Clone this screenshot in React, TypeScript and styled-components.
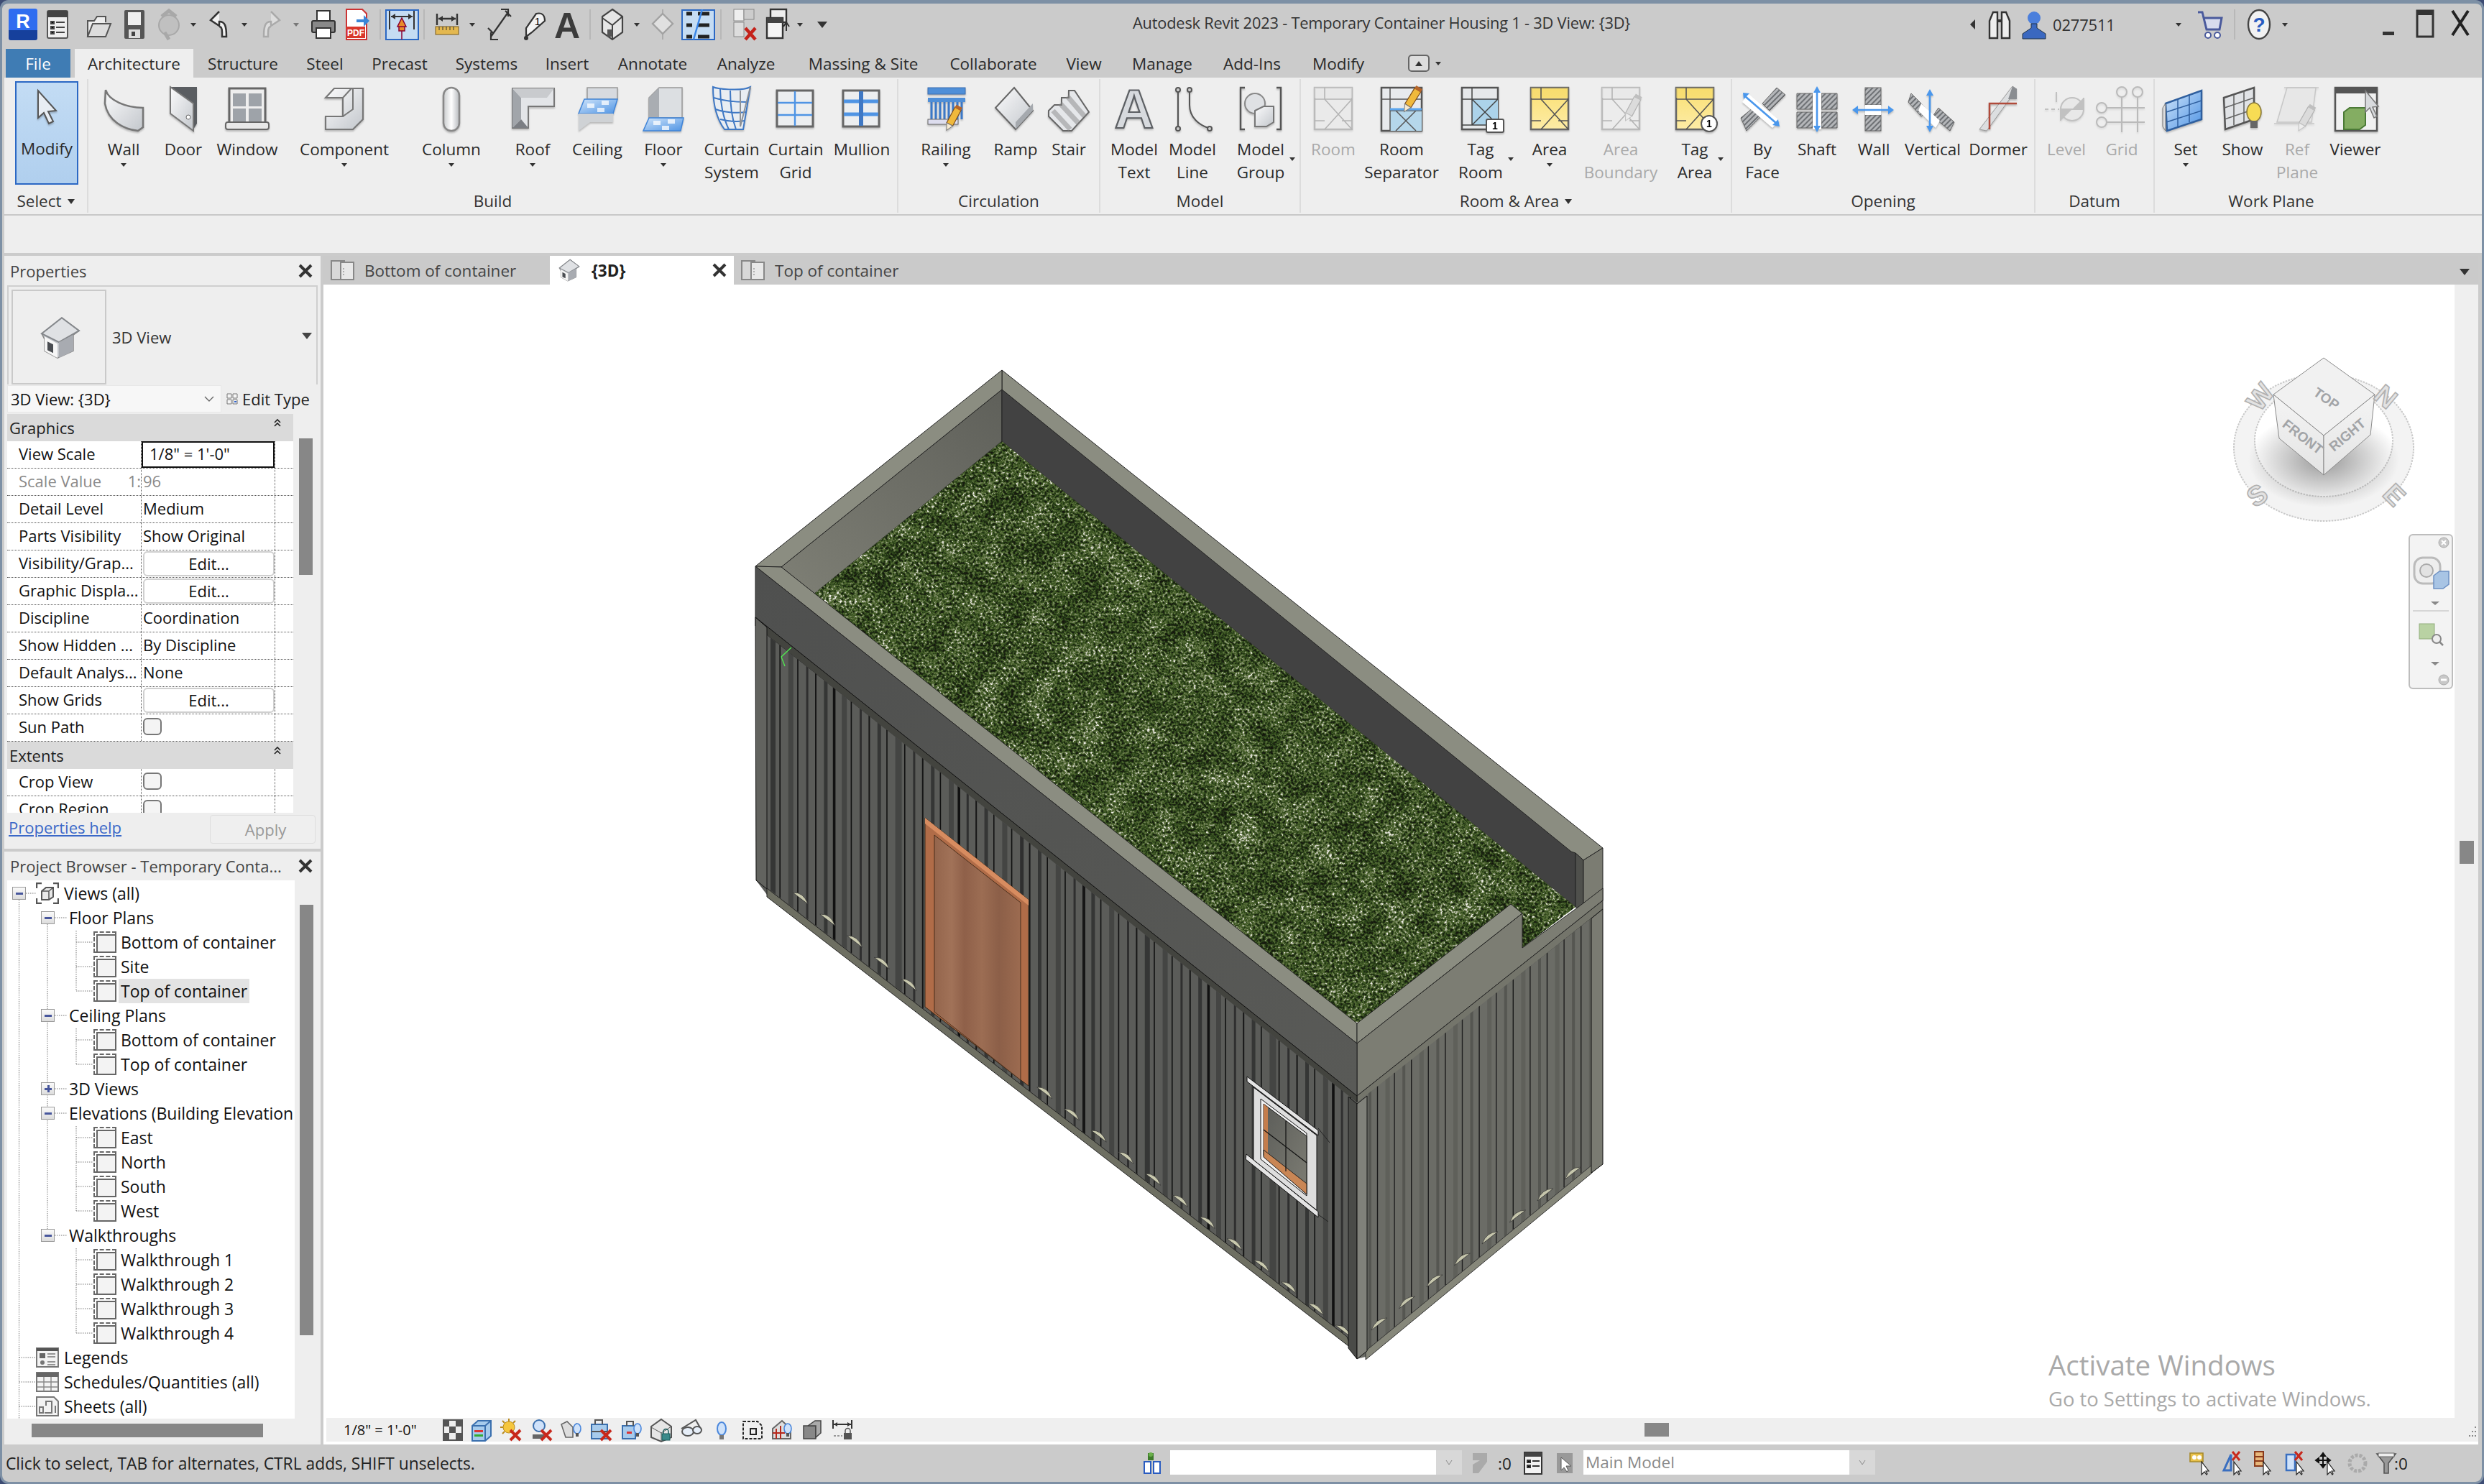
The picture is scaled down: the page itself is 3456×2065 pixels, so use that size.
import React from 'react';
import styled, { createGlobalStyle } from 'styled-components';

const FONT = `"Open Sans", "Noto Sans", "Liberation Sans", sans-serif`;

const Global = createGlobalStyle`
  html, body { margin: 0; padding: 0; background: #3d4c74; }
  #root { width: 3456px; height: 2065px; overflow: hidden; }
  * { box-sizing: border-box; }
`;

const Window = styled.div`
  width: 3456px; height: 2065px; display: flex; flex-direction: column;
  background: #cbcbcb; border: 3px solid #7d90a5; border-top-width: 5px; border-radius: 12px;
  overflow: hidden; font: 22.5px ${FONT}; color: #222;
`;

/* ---------- title bar ---------- */
const TitleBar = styled.div`height: 63px; display: flex; align-items: flex-start; padding-left: 9px; flex: none;`;
const Slot = styled.div<{ $w: number; $ml?: number }>`
  width: ${p => p.$w}px; margin-left: ${p => p.$ml ?? 0}px; height: 44px; margin-top: 7px; display: flex; align-items: center; justify-content: center; flex: none;
`;
const Logo = styled.div`
  width: 40px; height: 44px; flex: none; border-radius: 3px; color: #fff; font: bold 27px "Liberation Sans", sans-serif;
  display: flex; align-items: flex-start; justify-content: center; padding-top: 3px;
  background: linear-gradient(180deg, #2f6df0 0 68%, #16409c 68%);
`;
const QatSvg = styled.svg`width: 40px; height: 46px; display: block; flex: none; overflow: visible;`;
const ToggleBox = styled.div`
  width: 47px; height: 43px; flex: none; background: #c5dcf3; border: 2px solid #2b68c4;
  display: flex; align-items: center; justify-content: center;
`;
const QatSep = styled.div`width: 2px; height: 42px; flex: none; background: #b8b8b8;`;
const Caret = styled.div<{ $s?: number; $c?: string }>`
  width: 0; height: 0; flex: none;
  border-left: ${p => p.$s ?? 4}px solid transparent; border-right: ${p => p.$s ?? 4}px solid transparent;
  border-top: ${p => (p.$s ?? 4) * 1.4}px solid ${p => p.$c ?? '#333'};
`;
const LeftCaret = styled.div`width: 0; height: 0; border-top: 7px solid transparent; border-bottom: 7px solid transparent; border-right: 7px solid #333;`;
const AppTitle = styled.div`width: 1040px; padding-left: 6px; margin-top: 12px; height: 30px; line-height: 30px; font-size: 21.8px; color: #333; letter-spacing: -.2px; flex: none; white-space: nowrap;`;
const UserText = styled.div`font-size: 22px; color: #333; letter-spacing: -.2px; width: 100%; padding-left: 9px;`;

/* ---------- ribbon tabs ---------- */
const TabRow = styled.div`height: 40px; display: flex; padding-left: 5px; flex: none;`;
const FileTab = styled.div`width: 90px; margin-right: 6px; background: #3f7cb4; color: #fff; display: flex; align-items: center; justify-content: center;`;
const RibbonTab = styled.div<{ $w: number; $on?: boolean }>`
  width: ${p => p.$w}px; display: flex; align-items: center; justify-content: center; color: #2a2a2a;
  background: ${p => (p.$on ? '#eeeeee' : 'transparent')}; white-space: nowrap;
`;
const PinWrap = styled.div`display: flex; align-items: center; gap: 8px; margin-left: 40px;`;
const PinBox = styled.div`
  width: 30px; height: 24px; border: 2px solid #666; border-radius: 5px; background: #ddd;
  display: flex; align-items: center; justify-content: center;
`;
const UpTri = styled.div`width:0;height:0;border-left:5px solid transparent;border-right:5px solid transparent;border-bottom:7px solid #333;`;

/* ---------- ribbon ---------- */
const Ribbon = styled.div`height: 192px; flex: none; margin: 0 0 0 3px; background: #eeeeee; display: flex; border-bottom: 2px solid #c8c8c8;`;
const RibbonFoot = styled.div`height: 52px; flex: none; margin-left: 3px; background: #eeeeee;`;
const GapBar = styled.div`height: 4px; flex: none;`;
const Panel = styled.div<{ $w: number; $last?: boolean }>`
  width: ${p => p.$w}px; flex: none; display: flex; flex-direction: column; border-right: 2px solid ${p => (p.$last ? 'transparent' : '#dcdcdc')}; margin: 2px 0;
`;
const PanelItems = styled.div`height: 152px; display: flex; padding-top: 3px;`;
const PanelLabel = styled.div`
  height: 36px; line-height: 36px; padding-top: 4px; display: flex; justify-content: center; align-items: center; gap: 8px; color: #333;
`;
const Item = styled.div<{ $ml: number; $off?: boolean }>`
  width: 70px; margin-left: ${p => p.$ml}px; flex: none; position: relative; display: flex; flex-direction: column; align-items: center;
  padding-top: 7px; color: ${p => (p.$off ? '#a9a9a9' : '#2a2a2a')}; line-height: 32px; text-align: center; white-space: nowrap;
`;
const ModifyBtn = styled.div`
  width: 88px; height: 144px; margin-left: 15px; background: linear-gradient(180deg, #c3dcf4, #b0cfee); border: 2px solid #2b68c4;
  display: flex; flex-direction: column; align-items: center; padding-top: 5px; color: #2a2a2a; line-height: 32px;
`;
const ModifyLabel = styled.span`margin-top: -1px;`;
const RibbonSvg = styled.svg<{ $off?: boolean }>`
  width: 72px; height: 64px; display: block; margin-bottom: 8px; flex: none; overflow: visible;
  filter: drop-shadow(0 2px 1px rgba(0,0,0,.22)) ${p => (p.$off ? 'grayscale(1) opacity(.38)' : '')};
`;
const ItemCaret = styled(Caret)`margin-top: 3px;`;
const SideCaret = styled(Caret)<{ $x: number }>`position: absolute; left: ${p => 31 + p.$x}px; top: 106px;`;

/* ---------- body ---------- */
const Body = styled.div`height: 1654px; flex: none; display: flex; padding-left: 3px;`;
const Dock = styled.div`width: 440px; flex: none; display: flex; flex-direction: column; gap: 4px; margin-right: 4px;`;
const DockPanel = styled.section`height: 825px; background: #eeeeee; display: flex; flex-direction: column; flex: none;`;
const PanelHead = styled.div<{ $h: number }>`
  height: ${p => p.$h}px; flex: none; display: flex; align-items: center; justify-content: space-between;
  padding: 0 11px 0 8px; color: #444; white-space: nowrap; font-size: 22px;
`;
const CloseSvg = styled.svg`width: 20px; height: 20px; display: block;`;
const TypeBox = styled.div`
  height: 138px; margin-left: 4px; width: 432px; flex: none; border: 2px solid #cfcfcf; border-bottom: 0; display: flex; align-items: center; padding: 4px 4px 0;
`;
const Thumb = styled.div`width: 132px; height: 132px; border: 2px solid #c9c9c9; display: flex; align-items: center; justify-content: center; flex: none;`;
const TypeName = styled.div`margin-left: 8px; flex: 1; color: #333; font-size: 22px;`;
const DarkCaret = styled(Caret)`margin-right: 2px; margin-bottom: 4px;`;
const InstanceRow = styled.div`height: 38px; margin: 1px 0 2px 4px; display: flex; flex: none; align-items: center; white-space: nowrap; font-size: 22px;`;
const InstanceSel = styled.div`
  width: 298px; height: 38px; background: #f7f7f7; border: 1px solid #e8e8e8; display: flex; align-items: center; justify-content: space-between;
  padding: 0 9px 0 4px; color: #111;
`;
const EditType = styled.div`display: flex; align-items: center; gap: 6px; margin-left: 7px; color: #222;`;
const GridWrap = styled.div`height: 555px; flex: none; display: flex; margin-left: 4px;`;
const Grid = styled.div`width: 398px; flex: none; height: 100%; overflow: hidden; background: #fff; font-size: 22px;`;
const GroupHead = styled.div`
  height: 38px; background: #dadada; display: flex; align-items: center; justify-content: space-between; padding: 0 16px 0 3px; color: #222;
`;
const ChevSvg = styled.svg`width: 12px; height: 12px; align-self: flex-start; margin-top: 6px;`;
const Row = styled.div`display: flex; height: 38px; border-bottom: 1px dotted #555; flex: none;`;
const LabelCell = styled.div<{ $dim?: boolean }>`
  width: 187px; flex: none; display: flex; justify-content: space-between; align-items: center; padding: 0 0 3px 16px; white-space: nowrap; overflow: hidden;
  border-right: 1px dotted #555; color: ${p => (p.$dim ? '#8a8a8a' : '#111')};
`;
const ValueCell = styled.div<{ $dim?: boolean }>`
  width: 186px; flex: none; display: flex; align-items: center; padding: 0 0 3px 2px; border-right: 1px dotted #555; color: ${p => (p.$dim ? '#8a8a8a' : '#111')}; white-space: nowrap;
`;
const ScaleInput = styled.div`width: 186px; height: 37px; margin: 0 0 -3px -2px; border: 2px solid #111; padding: 0 0 3px 9px; display: flex; align-items: center; background: #fff;`;
const EditBtn = styled.div`width: 183px; height: 35px; margin: 0 0 -3px 0; border: 2px solid #cfcfcf; border-radius: 6px; background: #fff; display: flex; align-items: center; justify-content: center; padding-bottom: 2px;`;
const Check = styled.div`width: 26px; height: 24px; border: 2px solid #777; border-radius: 6px; background: #f4f4f4;`;
const Track = styled.div<{ $top: number; $h: number; $left: number }>`
  width: 19px; height: ${p => p.$h}px; margin: ${p => p.$top}px 0 0 ${p => p.$left}px; background: #878787; flex: none;
`;
const PropFoot = styled.div`height: 50px; flex: none; display: flex; align-items: flex-start; padding-left: 6px; font-size: 22px;`;
const HelpLink = styled.a`color: #3a68c8; text-decoration: underline; margin-top: 5px; line-height: 30px;`;
const ApplyBtn = styled.div`
  width: 147px; height: 40px; margin: 3px 0 0 auto; margin-right: 7px; border: 1px solid #dedede; border-radius: 4px; background: #efefef; color: #999;
  display: flex; align-items: center; justify-content: center; padding-left: 8px;
`;
const TreeWrap = styled.div`height: 749px; flex: none; display: flex; margin-left: 4px;`;
const Tree = styled.div`width: 400px; flex: none; height: 100%; background: #fff; position: relative; overflow: hidden; padding-top: 1px; font-size: 23px;`;
const TreeLines = styled.svg`position: absolute; left: 0; top: 0; width: 400px; height: 749px;`;
const TreeRow = styled.div<{ $pad: number }>`
  height: 34px; display: flex; align-items: center; padding-left: ${p => p.$pad}px; position: relative; white-space: nowrap; color: #111;
`;
const Expander = styled.div<{ $plus?: boolean; $gap: number }>`
  width: 19px; height: 18px; border: 1px solid #9a9a9a; background: linear-gradient(180deg, #fafafa, #dcdcdc); flex: none; position: relative; margin-right: ${p => p.$gap}px;
  &::before { content: ''; position: absolute; left: 4px; top: 7px; width: 10px; height: 3px; background: #47569c; }
  &::after { content: ''; display: ${p => (p.$plus ? 'block' : 'none')}; position: absolute; left: 8px; top: 3px; width: 3px; height: 10px; background: #47569c; }
`;
const LeafIcon = styled.div`
  width: 32px; height: 30px; border: 2px dashed #666; padding: 2px; flex: none; margin-right: 3px; background: #fff;
  &::after { content: ''; display: block; width: 100%; height: 100%; border: 2px solid #666; background: #f3f3f3; }
`;
const RootSvg = styled.svg`width: 32px; height: 30px; flex: none; margin-right: 7px; display: block;`;
const LeafText = styled.span<{ $sel?: boolean }>`
  background: ${p => (p.$sel ? '#e3e3e3' : 'transparent')}; padding: 0 3px; line-height: 34px;
`;
const BrowserFoot = styled.div`flex: 1; padding: 7px 0 0 38px;`;
const HBar = styled.div`width: 322px; height: 19px; background: #878787;`;

/* ---------- view ---------- */
const ViewArea = styled.div`width: 2998px; flex: none; display: flex; flex-direction: column; background: #fff;`;
const TabStrip = styled.div`height: 40px; flex: none; background: #cacaca; display: flex; align-items: stretch;`;
const VTab = styled.div<{ $w: number; $on?: boolean }>`
  width: ${p => p.$w}px; flex: none; display: flex; align-items: center; padding: 0 10px; background: ${p => (p.$on ? '#fff' : 'transparent')}; color: ${p => (p.$on ? '#222' : '#444')};
  font-weight: ${p => (p.$on ? 700 : 400)}; white-space: nowrap;
`;
const VTabIcon = styled.svg`width: 33px; height: 30px; flex: none; margin-right: 14px; display: block;`;
const VTabHouse = styled.div`width: 33px; flex: none; margin-right: 15px;`;
const VTabClose = styled.svg`width: 20px; height: 20px; margin-left: auto; display: block;`;
const StripCaret = styled(Caret)`margin: 18px 12px 0 auto;`;
const CanvasRow = styled.div`height: 1577px; flex: none; display: flex;`;
const Canvas = styled.div`width: 2965px; flex: none; position: relative; overflow: hidden; background: #fff;`;
const Drawing = styled.svg`position: absolute; left: 0; top: 0; width: 2965px; height: 1577px; display: block;`;
const Gutter = styled.div`width: 33px; flex: none; background: #efefef; padding: 774px 0 0 7px;`;
const VThumb = styled.div`width: 20px; height: 32px; background: #878787;`;
const Activate = styled.div`position: absolute; left: 2400px; top: 1480px; color: #a9a9a9; line-height: 1.2;`;
const ActivateBig = styled.div`font-size: 38.5px;`;
const ActivateSmall = styled.div`font-size: 27.4px; margin-top: 9px;`;
const NavBar = styled.div`
  position: absolute; right: 2px; top: 347px; width: 62px; height: 216px; background: #f3f3f3; border: 2px solid #bdbdbd; border-radius: 6px;
`;
const NavSvg = styled.svg`width: 58px; height: 212px; display: block;`;
const ViewBarRow = styled.div`height: 33px; flex: none; display: flex; margin-left: 4px; width: 2994px; background: #efefef; align-items: center; position: relative;`;
const ScaleText = styled.div`width: 155px; padding-left: 24px; font-size: 20px; color: #111; flex: none; white-space: nowrap;`;
const Mini = styled.div<{ $w: number }>`width: ${p => p.$w}px; flex: none; height: 33px; display: flex; align-items: center; justify-content: center;`;
const MiniSvg = styled.svg`width: 32px; height: 32px; display: block; overflow: visible; flex: none;`;
const HThumb = styled.div`position: absolute; left: 1834px; top: 7px; width: 34px; height: 19px; background: #878787;`;
const Grip = styled.svg`position: absolute; right: 2px; bottom: 4px; width: 16px; height: 18px;`;

/* ---------- status ---------- */
const StatusBar = styled.div`height: 52px; flex: none; display: flex; align-items: center; padding-left: 5px; color: #222;`;
const StatusText = styled.div`width: 1570px; flex: none; white-space: nowrap; font-size: 22.8px;`;
const Combo = styled.div<{ $w: number }>`
  width: ${p => p.$w}px; height: 34px; flex: none; display: flex; background: #fff; color: #8a8a8a; margin-top: -2px;
`;
const ComboText = styled.div`flex: 1; padding-left: 3px; line-height: 34px;`;
const ComboDrop = styled.div`width: 36px; background: #d8d8d8; display: flex; align-items: center; justify-content: center;`;
const Spacer = styled.div<{ $w: number }>`width: ${p => p.$w}px; flex: none;`;
const ZeroLabel = styled.span`width: 24px; flex: none;`;

/* ---------- shared gradients ---------- */
const Defs = () => (
  <svg width="0" height="0" style={{ position: 'absolute' }} aria-hidden>
    <defs>
      <linearGradient id="gL" x1="0" y1="0" x2="1" y2="1"><stop offset="0" stopColor="#fbfbfc" /><stop offset="1" stopColor="#c3c7cc" /></linearGradient>
      <linearGradient id="gH"><stop offset="0" stopColor="#c8cacc" /><stop offset=".5" stopColor="#fff" /><stop offset="1" stopColor="#b6b9bd" /></linearGradient>
      <linearGradient id="gV" x1="0" y1="0" x2="0" y2="1"><stop offset="0" stopColor="#d8dadd" /><stop offset="1" stopColor="#8f949a" /></linearGradient>
      <linearGradient id="gB" x1="0" y1="0" x2="1" y2="1"><stop offset="0" stopColor="#cfe4fa" /><stop offset="1" stopColor="#4f94e4" /></linearGradient>
      <linearGradient id="gY" x1="0" y1="0" x2="0" y2="1"><stop offset="0" stopColor="#fadf72" /><stop offset="1" stopColor="#fdeca6" /></linearGradient>
      <pattern id="hatch" width="5" height="5" patternUnits="userSpaceOnUse" patternTransform="rotate(45)">
        <rect width="5" height="5" fill="#b4b6b9" /><rect width="2" height="5" fill="#6d7074" />
      </pattern>
    </defs>
  </svg>
);

const Pencil = ({ x, y, r = 35, s = 1 }: { x: number; y: number; r?: number; s?: number }) => (
  <g transform={`translate(${x} ${y}) rotate(${r}) scale(${s})`}>
    <rect x="-5" y="-20" width="10" height="26" fill="#f0b93c" stroke="#7a4a1a" strokeWidth="1.2" />
    <rect x="-5" y="-24" width="10" height="5" fill="#b5652a" />
    <path d="M-5 6L0 16L5 6Z" fill="#f6ead2" stroke="#777" strokeWidth="1" />
  </g>
);
const PlanX = ({ fill, top = '#d8dade' }: { fill: string; top?: string }) => (
  <g>
    <rect x="10" y="2" width="52" height="58" fill={fill} stroke="#666" strokeWidth="2.5" />
    <rect x="10" y="2" width="52" height="14" fill={top} opacity=".45" />
    <path d="M10 18H62M24 2V18M24 18L62 60M62 18L24 60M10 48H24M48 48H62" stroke="#555" strokeWidth="1.6" fill="none" />
  </g>
);
const ModelA = () => (
  <text x="36" y="58" textAnchor="middle" fontFamily="Liberation Sans" fontWeight="bold" fontSize="76" fill="#d7dade" stroke="#5c5f63" strokeWidth="2.2">A</text>
);
const Arrow2 = ({ d }: { d: string }) => <path d={d} stroke="#4a97ec" strokeWidth="2.6" fill="none" />;

const Ico: Record<string, React.ReactNode> = {
  cursor: <path d="M24 6V44L32 37L39 52L45 49L38 35L49 34Z" fill="#e8edf3" stroke="#555" strokeWidth="2" />,
  wall: <path d="M11 5C15 20 40 30 63 30V57L56 62C36 60 14 48 10 24Z" fill="url(#gL)" stroke="#777" strokeWidth="2.5" />,
  door: <g><path d="M18 1H55V52L50 60V24Z" fill="#5a5d61" /><path d="M18 1L50 24V62L18 38Z" fill="url(#gL)" stroke="#777" strokeWidth="2" /><circle cx="43" cy="43" r="3" fill="#fff" stroke="#666" /></g>,
  window: <g><rect x="11" y="3" width="50" height="48" fill="#eee" stroke="#666" strokeWidth="3" /><path d="M16 10h18v18H16zM38 10h18v18H38zM16 31h18v18H16zM38 31h18v18H38z" fill="#9ea3a9" /><rect x="6" y="50" width="60" height="10" rx="3" fill="#e8e8e8" stroke="#666" strokeWidth="2" /></g>,
  component: <g><path d="M10 16L22 3H62V46L48 60H10V42H34V16Z" fill="url(#gL)" stroke="#777" strokeWidth="2.2" /><path d="M34 16L46 3M34 42L48 32V3M10 16H34" stroke="#777" strokeWidth="2" fill="none" /></g>,
  column: <rect x="25" y="2" width="22" height="60" rx="11" fill="url(#gH)" stroke="#888" strokeWidth="2.5" />,
  roof: <g><path d="M8 3H66V28H30V58H8Z" fill="#e3e5e8" stroke="#777" strokeWidth="2" /><path d="M8 3L20 16V46L8 58Z" fill="#a1a5aa" /><path d="M8 58H30L20 46Z" fill="#7b7e83" /><path d="M66 3L56 16H20L8 3Z" fill="#c9cbce" /></g>,
  ceiling: <g><path d="M22 2H64V18H22Z" fill="#d7dadf" stroke="#999" strokeWidth="1.5" /><path d="M18 18H64L58 38H10Z" fill="url(#gB)" stroke="#3f84d8" strokeWidth="1.5" /><path d="M22 24h10v6H22zM42 20h10v6H42zM36 30h10v6H36z" fill="#fff" opacity=".75" /><path d="M10 38H58V50H26L10 62Z" fill="#cfd2d5" /></g>,
  floor: <g><path d="M16 16L30 2H62V44H16Z" fill="#dcdfe2" stroke="#999" strokeWidth="1.5" /><path d="M16 16V46L30 44V2Z" fill="#a9adb2" /><path d="M16 44H64L60 62H8Z" fill="url(#gB)" stroke="#3f84d8" strokeWidth="1.5" /><path d="M22 48h10v6H22zM42 46h10v6H42zM34 55h10v6H34z" fill="#fff" opacity=".75" /></g>,
  cSystem: <g fill="none" stroke="#3f78c4" strokeWidth="2"><path d="M10 1C14 3 48 8 62 1L52 60H26C14 44 10 24 10 1Z" fill="#e9edf2" /><path d="M11 16C24 20 44 22 58 22M14 32C24 36 42 38 56 36M20 46C28 48 42 50 54 48M20 4C20 22 24 44 32 60M34 6C34 24 36 44 42 60" /><path d="M48 6V56L62 1" stroke="#8d9197" /></g>,
  cGrid: <g><rect x="10" y="6" width="50" height="50" fill="#eceef0" stroke="#666" strokeWidth="3" /><path d="M11 23H59M11 40H59M35 7V55" stroke="#4f94e4" strokeWidth="2.4" /></g>,
  mullion: <g><rect x="10" y="6" width="50" height="50" fill="#eceef0" stroke="#666" strokeWidth="3" /><path d="M11 21H59M11 39H59" stroke="#4f94e4" strokeWidth="5" /><path d="M35 7V55" stroke="#3f78c4" strokeWidth="6" /></g>,
  railing: <g><rect x="11" y="2" width="52" height="9" fill="#4f8fd8" stroke="#3a6cb0" /><rect x="11" y="16" width="52" height="6" fill="#4f8fd8" /><path d="M16 22V46M22 22V46M28 22V46M34 22V46M40 22V46M46 22V46M52 22V46M58 22V46" stroke="#3a78c8" strokeWidth="3" /><rect x="11" y="46" width="42" height="7" fill="#dde" stroke="#666" /><Pencil x={44} y={48} r={28} s={.95} /></g>,
  ramp: <g><path d="M34 2L60 34L36 60L8 30Z" fill="url(#gL)" stroke="#666" strokeWidth="2" /><path d="M60 34L36 60V50L60 24Z" fill="#a5a9ae" /></g>,
  stair: <g><path d="M8 34L16 26H26V16H36V6H44L64 36L40 62L28 62L8 42Z" fill="#e5e7ea" stroke="#666" strokeWidth="2" /><path d="M14 34L38 60M24 24L50 52M34 14L58 42" stroke="#888" strokeWidth="7" fill="none" opacity=".5" /></g>,
  mText: <ModelA />,
  mLine: <g fill="none" stroke="#555" strokeWidth="2"><path d="M16 8V56M32 8V26C32 44 46 54 58 58" /><circle cx="16" cy="5" r="3" /><circle cx="32" cy="5" r="3" /><circle cx="16" cy="59" r="3" /><circle cx="60" cy="59" r="3" /></g>,
  mGroup: <g><path d="M14 2H8V60H14M58 2H64V60H58" fill="none" stroke="#555" strokeWidth="2.4" /><circle cx="28" cy="24" r="14" fill="#dfe1e4" stroke="#888" strokeWidth="2" /><path d="M28 34L40 28H54V50L44 56H28Z" fill="url(#gL)" stroke="#777" strokeWidth="2" /></g>,
  room: <PlanX fill="#e2e3e5" />,
  roomSep: <g><rect x="8" y="2" width="56" height="60" fill="#e8eaed" stroke="#555" strokeWidth="2.5" /><rect x="20" y="34" width="44" height="28" fill="#b5d7eb" /><path d="M20 2V62M8 18H64M20 34H64M28 34L56 62M56 34L28 62" stroke="#555" strokeWidth="1.5" fill="none" /><path d="M20 32H64" stroke="#5ba5ee" strokeWidth="3" /><Pencil x={48} y={22} r={32} /></g>,
  tagRoom: <g><rect x="10" y="2" width="50" height="58" fill="#e6e8ea" stroke="#555" strokeWidth="2.5" /><rect x="24" y="18" width="36" height="36" fill="#acd3ea" /><path d="M10 18H60M24 2V54M24 18L60 54M60 18L24 54M10 54H60" stroke="#444" strokeWidth="1.5" fill="none" /><rect x="44" y="46" width="24" height="18" rx="2" fill="#fff" stroke="#555" strokeWidth="2" /><text x="56" y="60" textAnchor="middle" fontSize="14" fontWeight="bold" fontFamily="Liberation Sans">1</text></g>,
  area: <PlanX fill="url(#gY)" top="#f5d968" />,
  areaB: <g><PlanX fill="#eaeaea" /><Pencil x={50} y={34} r={28} /></g>,
  tagArea: <g><PlanX fill="url(#gY)" top="#f5d968" /><circle cx="56" cy="52" r="11" fill="#fff" stroke="#555" strokeWidth="2" /><text x="56" y="57" textAnchor="middle" fontSize="14" fontWeight="bold" fontFamily="Liberation Sans">1</text></g>,
  byFace: <g><path d="M56 2L68 12L46 34L36 24Z" fill="url(#hatch)" stroke="#666" /><path d="M6 44L28 26L38 38L14 62Z" fill="url(#hatch)" stroke="#666" /><path d="M16 10L60 48L50 58L8 22Z" fill="#fff" /><Arrow2 d="M12 14L56 52" /><path d="M9 9L18 10L10 18ZM60 56L50 54L58 46Z" fill="#4a97ec" /></g>,
  shaft: <g><path d="M8 10H30V32H8ZM42 10H64V32H42ZM8 36H30V58H8ZM42 36H64V58H42Z" fill="url(#hatch)" stroke="#666" /><rect x="30" y="8" width="12" height="52" fill="#fff" /><Arrow2 d="M36 4V60" /><path d="M36 0L41 9H31ZM36 64L41 55H31Z" fill="#4a97ec" /></g>,
  wallOp: <g><rect x="24" y="2" width="22" height="24" fill="url(#hatch)" stroke="#666" /><rect x="24" y="40" width="22" height="22" fill="url(#hatch)" stroke="#666" /><rect x="24" y="26" width="22" height="14" fill="#fff" /><Arrow2 d="M10 33H60" /><path d="M6 33L14 27V39ZM64 33L56 27V39Z" fill="#4a97ec" /></g>,
  vertical: <g><path d="M6 10L30 34L20 42L2 22ZM44 30L66 50L60 62L36 42Z" fill="url(#hatch)" stroke="#666" /><path d="M20 24L46 48L40 58L16 34Z" fill="#fff" /><Arrow2 d="M32 8V60" /><path d="M32 4L37 13H27ZM32 64L37 55H27Z" fill="#4a97ec" /></g>,
  dormer: <g><path d="M56 0L62 4L20 62L10 60Z" fill="#dcdee0" stroke="#999" /><path d="M56 0L62 4V18L50 18Z" fill="#8a8d91" /><path d="M24 60V24H62" fill="none" stroke="#b04a3a" strokeWidth="2.5" /></g>,
  level: <g fill="none" stroke="#777" strokeWidth="2"><circle cx="44" cy="32" r="16" fill="#ddd" /><path d="M44 32H60V16M44 32H28V48" fill="#777" /><path d="M6 32H26" strokeDasharray="5 4" /><path d="M22 8V22" /></g>,
  grid: <g fill="none" stroke="#666" strokeWidth="2"><circle cx="36" cy="8" r="7" /><circle cx="58" cy="8" r="7" /><circle cx="8" cy="30" r="7" /><circle cx="8" cy="50" r="7" /><path d="M36 15V64M58 15V64M15 30H68M15 50H68" /></g>,
  set: <g><path d="M8 24L58 6V46L10 62Z" fill="url(#gB)" stroke="#2f5f9e" strokeWidth="2.5" /><path d="M25 18V56M41 12V50M9 36L58 20M9 50L58 34" stroke="#2f5f9e" strokeWidth="1.5" /><path d="M4 30L8 24V62L4 56Z" fill="#ddd" stroke="#777" /></g>,
  show: <g><path d="M10 16L52 2V46L12 60Z" fill="#e1e3e6" stroke="#555" strokeWidth="2.5" /><path d="M24 12V54M38 7V50M11 30L52 16M11 46L52 32" stroke="#666" strokeWidth="1.6" /><ellipse cx="52" cy="36" rx="10" ry="13" fill="#f7dc54" stroke="#8a7a3a" strokeWidth="1.5" /><rect x="47" y="48" width="10" height="10" fill="#666" /></g>,
  refPlane: <g><path d="M22 2H62L56 50H8Z" fill="#dcdcdc" stroke="#888" strokeWidth="1.5" /><path d="M18 2H66M4 52H60" stroke="#888" strokeWidth="1.5" /><Pencil x={46} y={48} r={30} /></g>,
  viewer: <g><rect x="8" y="2" width="58" height="60" fill="#f1f1f1" stroke="#555" strokeWidth="2.5" /><rect x="8" y="2" width="58" height="8" fill="#555" /><path d="M20 36L28 30H50V54L42 60H20Z" fill="#84ad62" stroke="#4b7a36" strokeWidth="2" /><path d="M50 6V36L56 30L62 44L66 42L60 29L68 28Z" fill="#d8dadd" stroke="#777" strokeWidth="1.5" /></g>,
};

type It = { l: string[]; i: string; cx: number; c?: boolean; off?: boolean; side?: number };
type Pn = { label: string; x: number; w: number; caret?: boolean; items: It[] };
const panels: Pn[] = [
  { label: 'Build', x: 123, w: 1127, items: [
    { l: ['Wall'], i: 'wall', cx: 172, c: true }, { l: ['Door'], i: 'door', cx: 255 }, { l: ['Window'], i: 'window', cx: 344 },
    { l: ['Component'], i: 'component', cx: 479, c: true }, { l: ['Column'], i: 'column', cx: 628, c: true }, { l: ['Roof'], i: 'roof', cx: 741, c: true },
    { l: ['Ceiling'], i: 'ceiling', cx: 831 }, { l: ['Floor'], i: 'floor', cx: 923, c: true }, { l: ['Curtain', 'System'], i: 'cSystem', cx: 1018 },
    { l: ['Curtain', 'Grid'], i: 'cGrid', cx: 1107 }, { l: ['Mullion'], i: 'mullion', cx: 1199 } ] },
  { label: 'Circulation', x: 1250, w: 281, items: [
    { l: ['Railing'], i: 'railing', cx: 1316, c: true }, { l: ['Ramp'], i: 'ramp', cx: 1413 }, { l: ['Stair'], i: 'stair', cx: 1487 } ] },
  { label: 'Model', x: 1531, w: 279, items: [
    { l: ['Model', 'Text'], i: 'mText', cx: 1578 }, { l: ['Model', 'Line'], i: 'mLine', cx: 1659 }, { l: ['Model', 'Group'], i: 'mGroup', cx: 1754, side: 44 } ] },
  { label: 'Room & Area', x: 1810, w: 600, caret: true, items: [
    { l: ['Room'], i: 'room', cx: 1855, off: true }, { l: ['Room', 'Separator'], i: 'roomSep', cx: 1950 }, { l: ['Tag', 'Room'], i: 'tagRoom', cx: 2060, side: 42 },
    { l: ['Area'], i: 'area', cx: 2156, c: true }, { l: ['Area', 'Boundary'], i: 'areaB', cx: 2255, off: true }, { l: ['Tag', 'Area'], i: 'tagArea', cx: 2358, side: 36 } ] },
  { label: 'Opening', x: 2410, w: 422, items: [
    { l: ['By', 'Face'], i: 'byFace', cx: 2452 }, { l: ['Shaft'], i: 'shaft', cx: 2528 }, { l: ['Wall'], i: 'wallOp', cx: 2607 },
    { l: ['Vertical'], i: 'vertical', cx: 2689 }, { l: ['Dormer'], i: 'dormer', cx: 2780 } ] },
  { label: 'Datum', x: 2832, w: 166, items: [{ l: ['Level'], i: 'level', cx: 2875, off: true }, { l: ['Grid'], i: 'grid', cx: 2952, off: true }] },
  { label: 'Work Plane', x: 2998, w: 326, items: [
    { l: ['Set'], i: 'set', cx: 3041, c: true }, { l: ['Show'], i: 'show', cx: 3120 }, { l: ['Ref', 'Plane'], i: 'refPlane', cx: 3196, off: true }, { l: ['Viewer'], i: 'viewer', cx: 3277 } ] },
];

const tabs: [string, number][] = [['Structure', 138], ['Steel', 90], ['Precast', 118], ['Systems', 124], ['Insert', 100], ['Annotate', 138], ['Analyze', 122], ['Massing & Site', 204], ['Collaborate', 158], ['View', 94], ['Manage', 124], ['Add-Ins', 126], ['Modify', 114]];

function Q_A() {
  return <QatSvg viewBox="0 0 40 46"><text x="20" y="42" textAnchor="middle" fontSize="50" fontWeight="bold" fontFamily="Liberation Sans" fill="#3c3c3c">A</text></QatSvg>;
}
/* quick access icons, drawn in a 40 x 46 box; the number is the centre x of each */
const Q = (c: React.ReactNode) => <QatSvg viewBox="0 0 40 46">{c}</QatSvg>;
const qat: [React.ReactNode, number][] = [
  [<Logo>R</Logo>, 32],
  [Q(<g><rect x="6" y="4" width="28" height="38" rx="2" fill="#eee" stroke="#555" strokeWidth="2" /><rect x="6" y="4" width="28" height="9" fill="#444" /><path d="M11 19h4v3h-4zM11 26h4v3h-4zM11 33h4v3h-4zM18 20h12M18 27h12M18 34h12" stroke="#444" strokeWidth="2" /></g>), 80],
  [Q(<g><path d="M5 40V18H14L18 12H30V20" fill="#eee" stroke="#555" strokeWidth="2" /><path d="M5 40L12 22H37L30 40Z" fill="#ddd" stroke="#555" strokeWidth="2" /></g>), 137],
  [Q(<g><rect x="6" y="3" width="28" height="40" rx="2" fill="#555" /><rect x="11" y="6" width="18" height="18" fill="#eee" /><rect x="12" y="30" width="16" height="12" fill="#ddd" /><rect x="16" y="33" width="5" height="6" fill="#444" /></g>), 187],
  [Q(<g opacity=".7"><circle cx="20" cy="24" r="14" fill="#bbb" stroke="#999" strokeWidth="2" /><path d="M10 12L20 4L30 12M14 34L20 44" stroke="#999" strokeWidth="5" fill="none" /></g>), 235],
  [<Caret />, 269],
  [Q(<path d="M20 5L8 17L20 25V19C28 19 30 25 30 40H24V34C24 28 22 26 20 26" fill="#f2f2f2" stroke="#333" strokeWidth="2.5" />), 305],
  [<Caret />, 340],
  [Q(<path d="M20 5L32 17L20 25V19C12 19 10 25 10 40H16V34C16 28 18 26 20 26" fill="#ddd" stroke="#aaa" strokeWidth="2.5" />), 377],
  [<Caret $c="#777" />, 412],
  [Q(<g><rect x="11" y="4" width="18" height="14" fill="#fff" stroke="#333" strokeWidth="2" /><rect x="4" y="18" width="32" height="16" rx="2" fill="#888" stroke="#333" strokeWidth="2" /><rect x="10" y="28" width="20" height="14" fill="#fff" stroke="#333" strokeWidth="2" /></g>), 450],
  [Q(<g><path d="M6 2H28L34 8V44H6Z" fill="#fff" stroke="#c33" strokeWidth="2" /><rect x="6" y="26" width="26" height="16" fill="#d9372c" /><text x="19" y="39" textAnchor="middle" fontSize="12" fontWeight="bold" fill="#fff" fontFamily="Liberation Sans">PDF</text><path d="M20 16H30V10L38 18L30 26V20H20Z" fill="#3a86d8" /></g>), 496],
  [<QatSep />, 529],
  [<ToggleBox><QatSvg viewBox="0 0 40 46"><path d="M3 4V30M37 4V30M5 12H35" stroke="#333" strokeWidth="2" fill="none" /><path d="M5 12l6-4v8zM35 12l-6-4v8z" fill="#333" /><path d="M20 14L14 26H26ZM16 26V32H24V26M20 32V44" fill="#e88c2c" stroke="#803" strokeWidth="1.5" /></QatSvg></ToggleBox>, 559],
  [<QatSep />, 590],
  [Q(<g><path d="M6 8V24M34 8V24M8 15H32" stroke="#333" strokeWidth="2.4" fill="none" /><path d="M8 15l6-4v8zM32 15l-6-4v8z" fill="#333" /><rect x="4" y="26" width="32" height="11" fill="#e4b84f" stroke="#7a5a1a" /><path d="M9 26v5M14 26v5M19 26v5M24 26v5M29 26v5" stroke="#333" /></g>), 622],
  [<Caret />, 657],
  [Q(<path d="M8 40L32 6M8 34V44L18 44M32 12V2L22 2M4 28L12 36M28 4L36 12" stroke="#333" strokeWidth="2.2" fill="none" />), 695],
  [Q(<g><path d="M8 40V28L22 8C30 6 34 10 34 18L16 34L8 40" fill="#f3f3f3" stroke="#333" strokeWidth="2.2" /><text x="24" y="24" textAnchor="middle" fontSize="15" fontFamily="Liberation Sans">1</text><circle cx="8" cy="42" r="3" fill="#333" /></g>), 744],
  [<Q_A />, 789],
  [<QatSep />, 821],
  [Q(<g><path d="M20 2L34 12V34L20 44L6 34V12Z" fill="#e6e6e6" stroke="#444" strokeWidth="2.2" /><path d="M6 14L20 24L34 12M20 24V44" stroke="#444" strokeWidth="2" fill="none" /><rect x="13" y="30" width="7" height="10" fill="#555" /></g>), 852],
  [<Caret />, 886],
  [Q(<g opacity=".6"><path d="M20 2V44" stroke="#999" strokeWidth="2" /><path d="M20 8L34 22L20 36L6 22Z" fill="#eee" stroke="#888" strokeWidth="2.4" /></g>), 922],
  [<ToggleBox><QatSvg viewBox="0 0 40 46"><path d="M4 8h8M4 24h8M4 40h8M20 8h16M20 24h16M20 40h16" stroke="#222" strokeWidth="5" /><path d="M26 2L14 44" stroke="#3a86e8" strokeWidth="2.5" /></QatSvg></ToggleBox>, 971],
  [<QatSep />, 1003],
  [Q(<g><rect x="6" y="2" width="14" height="16" fill="#eee" stroke="#888" /><rect x="20" y="2" width="14" height="14" fill="#ccc" stroke="#888" /><rect x="6" y="20" width="14" height="20" fill="#ddd" stroke="#888" /><path d="M22 28L36 44M36 28L22 44" stroke="#c4221a" strokeWidth="4.5" /></g>), 1035],
  [Q(<g><rect x="10" y="2" width="22" height="18" fill="#eee" stroke="#333" strokeWidth="2.4" /><rect x="5" y="14" width="22" height="28" fill="#f5f5f5" stroke="#333" strokeWidth="2.4" /><rect x="5" y="14" width="22" height="7" fill="#444" /><path d="M32 22V32M36 26L32 20L28 26" stroke="#333" strokeWidth="2" fill="none" /></g>), 1082],
  [<Caret />, 1113],
  [<Caret $s={7} $c="#333" />, 1144],
];
const SLOT = 20;
const qatMargins = qat.map(([, c], i) => {
  const prevEnd = i === 0 ? 12 : qat[i - 1][1] + SLOT / 2;
  return c - SLOT / 2 - prevEnd;
});

const X = ({ s = 4, c = '#333' }: { s?: number; c?: string }) => (
  <path d="M2 2L18 18M18 2L2 18" stroke={c} strokeWidth={s} fill="none" />
);

const Chev = () => (
  <ChevSvg viewBox="0 0 12 12"><path d="M2 6L6 2L10 6M2 11L6 7L10 11" stroke="#222" strokeWidth="1.6" fill="none" /></ChevSvg>
);

const House = ({ size = 60 }: { size?: number }) => (
  <svg width={size} height={size * 1.04} viewBox="0 0 60 62" style={{ filter: 'blur(.5px)', display: 'block' }}>
    <path d="M6 26L34 4L58 22L50 28V50L28 60L10 50V34Z" fill="#c3c6cb" stroke="#888" strokeWidth="1.5" />
    <path d="M34 4L58 22L30 38L6 26Z" fill="#dfe1e4" stroke="#85888c" strokeWidth="2" />
    <path d="M10 30L28 40V60L10 50Z" fill="#f6f6f6" />
    <path d="M14 37L22 41V53L14 49Z" fill="#4a4d52" />
    <path d="M30 38V60L50 50V28Z" fill="#a8abb1" />
  </svg>
);

type TR = { t: string; k: 'root' | 'exp' | 'plus' | 'leaf' | 'leg' | 'sch' | 'sht'; sel?: boolean };
const tree: TR[] = [
  { t: 'Views (all)', k: 'root' }, { t: 'Floor Plans', k: 'exp' }, { t: 'Bottom of container', k: 'leaf' }, { t: 'Site', k: 'leaf' },
  { t: 'Top of container', k: 'leaf', sel: true }, { t: 'Ceiling Plans', k: 'exp' }, { t: 'Bottom of container', k: 'leaf' }, { t: 'Top of container', k: 'leaf' },
  { t: '3D Views', k: 'plus' }, { t: 'Elevations (Building Elevation', k: 'exp' }, { t: 'East', k: 'leaf' }, { t: 'North', k: 'leaf' }, { t: 'South', k: 'leaf' }, { t: 'West', k: 'leaf' },
  { t: 'Walkthroughs', k: 'exp' }, { t: 'Walkthrough 1', k: 'leaf' }, { t: 'Walkthrough 2', k: 'leaf' }, { t: 'Walkthrough 3', k: 'leaf' }, { t: 'Walkthrough 4', k: 'leaf' },
  { t: 'Legends', k: 'leg' }, { t: 'Schedules/Quantities (all)', k: 'sch' }, { t: 'Sheets (all)', k: 'sht' },
];

const TreeConnectors = () => {
  const cy = (i: number) => 18 + 34 * i;
  const segs: string[] = [`M16.5 ${cy(0)}V749`, `M26 ${cy(0)}H40`, `M56 ${cy(1)}V${cy(14)}`];
  tree.forEach((r, i) => {
    if (r.k === 'exp' || r.k === 'plus') segs.push(`M66 ${cy(i)}H84`);
    if (r.k === 'leaf') segs.push(`M96 ${cy(i)}H120`);
    if (r.k === 'leg' || r.k === 'sch' || r.k === 'sht') segs.push(`M16.5 ${cy(i)}H40`);
  });
  [[1, 4], [5, 7], [9, 13], [14, 18]].forEach(([a, b]) => segs.push(`M96 ${cy(a) + 18}V${cy(b)}`));
  return <TreeLines viewBox="0 0 400 749"><path d={segs.join('')} stroke="#777" strokeWidth="1" strokeDasharray="1.5 1.5" fill="none" /></TreeLines>;
};

const rootIcons: Record<string, React.ReactNode> = {
  root: <g fill="none" stroke="#555" strokeWidth="2.4"><path d="M1 8V1H8M24 1H31V8M1 22V29H8M24 29H31V22" /><path d="M8 12L14 7H24V20L18 24H8Z" fill="#e8e8e8" strokeWidth="2" /><path d="M8 12H18V24M18 12L24 7" strokeWidth="1.5" /></g>,
  leg: <g><rect x="1" y="2" width="30" height="26" fill="#f3f3f3" stroke="#777" strokeWidth="2" /><rect x="1" y="2" width="30" height="4" fill="#555" /><rect x="5" y="9" width="8" height="7" fill="#666" /><circle cx="9" cy="22" r="3" fill="#777" /><path d="M16 10H27M16 14H27M16 21H27M16 25H27" stroke="#777" strokeWidth="1.4" /></g>,
  sch: <g><rect x="1" y="2" width="30" height="26" fill="#f3f3f3" stroke="#777" strokeWidth="2" /><rect x="1" y="2" width="30" height="6" fill="#666" /><path d="M1 15H31M1 22H31M11 8V28M21 8V28" stroke="#888" strokeWidth="1.4" /></g>,
  sht: <g><path d="M1 2H25L31 8V28H1Z" fill="#f3f3f3" stroke="#777" strokeWidth="2" /><path d="M5 24V16H10V24H5ZM12 24H22V8H14V14" fill="none" stroke="#777" strokeWidth="2" /><path d="M27 14V24" stroke="#777" strokeWidth="2" /></g>,
};

/* ---------- the 3D model ---------- */
const pts = (a: number[][]) => a.map(p => p.join(',')).join(' ');
const topL = (x: number) => 871 + (x - 1051) * 0.7921;
const botL = (x: number) => 1235 + (x - 1067) * 0.7745;
const topR = (x: number) => 1534 - (x - 1888) * 0.7865;
const botR = (x: number) => 1880 - (x - 1900) * 0.825;

const stripeL = Array.from({ length: 66 }, (_, i) => {
  const x = 1072 + i * 12.4;
  const w = [5, 1.6, 7, 1.6, 3, 2][i % 6] + (i % 7 === 0 ? 2 : 0);
  const fill = ['#353635', '#111', '#444543', '#111', '#2f2f2f', '#161616'][i % 6];
  return { x, w, fill };
});
const stripeR = Array.from({ length: 27 }, (_, i) => {
  const x = 1904 + i * 11.8;
  const w = [4, 1.4, 6, 1.4][i % 4];
  const fill = ['#555651', '#1a1a1a', '#5f605a', '#1f1f1f'][i % 4];
  return { x, w, fill };
});

const Building = () => (
  <g>
    <defs>
      <linearGradient id="wallBL" x1="0" y1="1" x2="1" y2="0"><stop offset="0" stopColor="#7e7f75" /><stop offset="1" stopColor="#5f605a" /></linearGradient>
      <linearGradient id="fascia" x1="0" y1="0" x2="1" y2="1"><stop offset="0" stopColor="#4f504f" /><stop offset="1" stopColor="#595a57" /></linearGradient>
      <linearGradient id="wood" x1="0" y1="0" x2="1" y2="0">
        <stop offset="0" stopColor="#94654c" /><stop offset=".2" stopColor="#a17258" /><stop offset=".35" stopColor="#8f6049" /><stop offset=".55" stopColor="#9c6d53" /><stop offset=".75" stopColor="#8c5f48" /><stop offset="1" stopColor="#9c6b50" />
      </linearGradient>
      <linearGradient id="glass" x1="0" y1="0" x2="1" y2="1"><stop offset="0" stopColor="#5b5c58" /><stop offset="1" stopColor="#7d7d74" /></linearGradient>
      <clipPath id="grassClip"><polygon points={pts([[1394, 614], [1133, 826], [1888, 1426], [2118, 1319], [2192, 1262]])} /></clipPath>
      <filter id="grass" x="0" y="0" width="100%" height="100%" colorInterpolationFilters="sRGB">
        <feTurbulence type="fractalNoise" baseFrequency="0.28" numOctaves="3" seed="7" result="fine" />
        <feColorMatrix in="fine" type="matrix" values="1.45 0 0 0 -.225  1.45 0 0 0 -.225  1.45 0 0 0 -.225  0 0 0 0 1" result="f1" />
        <feTurbulence type="fractalNoise" baseFrequency="0.028" numOctaves="2" seed="21" result="low" />
        <feColorMatrix in="low" type="matrix" values="1 0 0 0 0  1 0 0 0 0  1 0 0 0 0  0 0 0 0 1" result="l1" />
        <feComposite in="f1" in2="l1" operator="arithmetic" k1="0" k2="1" k3="0.55" k4="-0.275" result="mix" />
        <feComponentTransfer in="mix">
          <feFuncR type="table" tableValues="0.08 0.09 0.11 0.15 0.24 0.32 0.44 0.72 0.95" />
          <feFuncG type="table" tableValues="0.09 0.11 0.15 0.24 0.34 0.41 0.5 0.74 0.95" />
          <feFuncB type="table" tableValues="0.05 0.06 0.07 0.09 0.14 0.2 0.34 0.66 0.92" />
        </feComponentTransfer>
      </filter>
    </defs>

    <polygon points={pts([[1394, 542], [1087, 789], [1133, 826], [1394, 614]])} fill="url(#wallBL)" stroke="#222" />
    <polygon points={pts([[1394, 542], [2192, 1187], [2192, 1262], [1394, 614]])} fill="#424242" stroke="#222" />
    <g clipPath="url(#grassClip)"><rect x="1120" y="600" width="1090" height="840" filter="url(#grass)" /></g>

    <polygon points={pts([[1394, 515], [2230, 1180], [2203, 1197], [2192, 1187], [2186, 1185], [1394, 542]])} fill="#8b8d81" stroke="#222" />
    <polygon points={pts([[1394, 515], [1051, 788], [1087, 789], [1394, 542]])} fill="#8b8d81" stroke="#222" />
    <polygon points={pts([[1051, 788], [1888, 1452], [1888, 1424], [1087, 789]])} fill="#8b8d81" stroke="#222" />
    <polygon points={pts([[1888, 1452], [2118, 1271], [2102, 1258], [1888, 1424]])} fill="#8b8d81" stroke="#222" />

    <polygon points={pts([[2192, 1187], [2203, 1197], [2203, 1270], [2192, 1262]])} fill="#4f504c" stroke="#222" />
    <polygon points={pts([[2203, 1197], [2230, 1180], [2230, 1253], [2203, 1270]])} fill="#7b7c72" stroke="#222" />

    <polygon points={pts([[1888, 1452], [2118, 1271], [2118, 1319], [2196, 1262], [2230, 1236], [2230, 1253], [1888, 1525]])} fill="#7c7d73" stroke="#222" />
    <polygon points={pts([[1888, 1525], [2230, 1253], [2230, 1265], [1888, 1537]])} fill="#74756b" stroke="#222" />

    <polygon points={pts([[1051, 788], [1888, 1452], [1888, 1525], [1051, 859]])} fill="url(#fascia)" stroke="#222" />
    <polygon points={pts([[1051, 859], [1888, 1525], [1888, 1537], [1051, 871]])} fill="#43443f" stroke="#111" />

    <polygon points={pts([[1051, 871], [1888, 1534], [1888, 1891], [1874, 1870], [1067, 1245], [1052, 1225]])} fill="#5b5c59" />
    {stripeL.map((s, i) => (
      <polygon key={i} points={pts([[s.x, topL(s.x)], [s.x + s.w, topL(s.x + s.w)], [s.x + s.w, botL(s.x + s.w)], [s.x, botL(s.x)]])} fill={s.fill} />
    ))}
    <polygon points={pts([[1051, 859], [1067, 873], [1067, 1237], [1052, 1225]])} fill="#62635f" stroke="#111" />
    <polygon points={pts([[1067, 1236], [1874, 1860], [1880, 1876], [1067, 1248]])} fill="#6e6f62" stroke="#222" />
    {Array.from({ length: 21 }, (_, i) => {
      const cx = 1114 + i * 37.75;
      const cy = 1250 + i * 30.1;
      return <path key={i} d={`M${cx - 11} ${cy - 8}L${cx + 10} ${cy + 8}Q${cx + 4} ${cy - 9} ${cx - 11} ${cy - 8}Z`} fill="#c9c9ae" stroke="#333" strokeWidth=".8" />;
    })}

    <polygon points={pts([[1888, 1534], [2230, 1265], [2230, 1620], [1900, 1888], [1888, 1891]])} fill="#6b6c66" />
    {stripeR.map((s, i) => (
      <polygon key={i} points={pts([[s.x, topR(s.x)], [s.x + s.w, topR(s.x + s.w)], [s.x + s.w, botR(s.x + s.w)], [s.x, botR(s.x)]])} fill={s.fill} />
    ))}
    <polygon points={pts([[1900, 1880], [2215, 1621], [2215, 1632], [1900, 1892]])} fill="#86877a" stroke="#333" />
    {Array.from({ length: 8 }, (_, i) => {
      const cx = 1919 + i * 38.5;
      const cy = 1842 - i * 30;
      return <path key={i} d={`M${cx - 11} ${cy + 9}L${cx + 11} ${cy - 8}Q${cx - 5} ${cy - 8} ${cx - 11} ${cy + 9}Z`} fill="#c6c6ac" stroke="#333" strokeWidth=".8" />;
    })}
    <polygon points={pts([[1876, 1526], [1888, 1536], [1888, 1891], [1876, 1876]])} fill="#4a4b48" stroke="#111" />
    <polygon points={pts([[1888, 1536], [1902, 1525], [1902, 1880], [1888, 1891]])} fill="#80817a" stroke="#111" />
    <polygon points={pts([[2214, 1278], [2230, 1265], [2230, 1620], [2214, 1632]])} fill="#7a7b72" stroke="#111" />

    <polygon points={pts([[1287, 1138], [1431, 1252], [1431, 1511], [1287, 1401]])} fill="#b06c48" stroke="#3a2a1a" />
    <polygon points={pts([[1287, 1138], [1431, 1252], [1431, 1260], [1287, 1146]])} fill="#d78c60" />
    <polygon points={pts([[1300, 1162], [1420, 1256], [1420, 1503], [1300, 1408]])} fill="url(#wood)" stroke="#4a2e1a" />

    <polygon points={pts([[1735, 1498], [1834, 1573], [1834, 1580], [1735, 1505]])} fill="#e4e4e4" stroke="#111" />
    <polygon points={pts([[1734, 1606], [1834, 1686], [1834, 1694], [1733, 1613]])} fill="#e4e4e4" stroke="#111" />
    <polygon points={pts([[1744, 1513], [1832, 1580], [1832, 1684], [1744, 1614]])} fill="#dedede" stroke="#111" />
    <polygon points={pts([[1754, 1529], [1818, 1577], [1818, 1664], [1754, 1613]])} fill="#f2f2f2" stroke="#111" />
    <polygon points={pts([[1758, 1536], [1818, 1581], [1818, 1662], [1758, 1608]])} fill="url(#glass)" stroke="#111" />
    <polygon points={pts([[1758, 1536], [1764, 1541], [1764, 1605], [1758, 1600]])} fill="#c47d4c" />
    <polygon points={pts([[1758, 1600], [1818, 1647], [1818, 1662], [1758, 1610]])} fill="#c98655" stroke="#222" />
    <path d="M1789 1560V1630M1758 1572L1818 1618" stroke="#111" strokeWidth="1.2" fill="none" />
    <path d="M1834 1570L1850 1590M1834 1690L1848 1700" stroke="#222" fill="none" />

    <path d="M1101 901L1087 914L1092 927" stroke="#50e650" strokeWidth="1.4" fill="none" />
  </g>
);

const CubeText = styled.text`font: bold 19px "Liberation Sans", sans-serif; fill: #a2a4a7;`;
const RingText = styled.text`font: bold 38px "Liberation Sans", sans-serif; fill: #e2e2e2; stroke: #b0b0b0; stroke-width: 1.6;`;

const ViewCube = () => (
  <g>
    <defs>
      <radialGradient id="cubeShadow"><stop offset="0" stopColor="#777" stopOpacity=".75" /><stop offset="1" stopColor="#777" stopOpacity="0" /></radialGradient>
      <linearGradient id="cubeFace" x1="0" y1="0" x2="0" y2="1"><stop offset="0" stopColor="#f4f4f4" /><stop offset="1" stopColor="#e4e4e4" /></linearGradient>
    </defs>
    <path d="M3233 521a125 102 0 1 0 .01 0ZM3233 535a96 78 0 1 1 -.01 0Z" fillRule="evenodd" fill="#f3f3f3" stroke="#c9c9c9" strokeWidth="2" strokeDasharray="2.5 1.5" />
    <ellipse cx="3233" cy="640" rx="105" ry="66" fill="url(#cubeShadow)" />
    <polygon points="3233,498 3304,549 3233,606 3163,549" fill="#f1f1f1" stroke="#8a8a8a" />
    <polygon points="3163,549 3233,606 3233,661 3171,610" fill="url(#cubeFace)" stroke="#8a8a8a" />
    <polygon points="3304,549 3233,606 3233,661 3298,605" fill="url(#cubeFace)" stroke="#8a8a8a" />
    <CubeText transform="translate(3233 560) rotate(35)" textAnchor="middle">TOP</CubeText>
    <CubeText transform="translate(3200 613) rotate(38)" textAnchor="middle">FRONT</CubeText>
    <CubeText transform="translate(3270 610) rotate(-40)" textAnchor="middle">RIGHT</CubeText>
    <RingText transform="translate(3155 560) rotate(-52)" textAnchor="middle">W</RingText>
    <RingText transform="translate(3311 562) rotate(40)" textAnchor="middle">N</RingText>
    <RingText transform="translate(3148 700) rotate(-35)" textAnchor="middle">S</RingText>
    <RingText transform="translate(3322 698) rotate(45)" textAnchor="middle">E</RingText>
  </g>
);

const NavIcons = () => (
  <NavSvg viewBox="0 0 58 212">
    <circle cx="47" cy="10" r="7" fill="#c8c8c8" stroke="#aaa" /><path d="M44 7l6 6M50 7l-6 6" stroke="#fff" strokeWidth="2" />
    <rect x="6" y="31" width="36" height="36" rx="12" fill="#eee" stroke="#bbb" strokeWidth="3" />
    <circle cx="23" cy="49" r="9" fill="#e2e2e2" stroke="#aaa" strokeWidth="2" />
    <path d="M33 56L41 50H54V68L46 74H33Z" fill="#a8c4e4" stroke="#6d91c4" strokeWidth="1.5" />
    <path d="M29 92h12l-6 5Z" fill="#888" />
    <path d="M4 105H54" stroke="#ccc" strokeWidth="1.5" />
    <rect x="13" y="123" width="21" height="21" fill="#b9d2a3" stroke="#92ad7c" />
    <circle cx="37" cy="144" r="6" fill="#eee" stroke="#888" strokeWidth="2" /><path d="M41 148L46 153" stroke="#888" strokeWidth="2.5" />
    <path d="M29 176h12l-6 5Z" fill="#888" />
    <circle cx="47" cy="201" r="7" fill="#c8c8c8" stroke="#aaa" /><path d="M43 201H51" stroke="#fff" strokeWidth="3" />
  </NavSvg>
);

const M = (c: React.ReactNode) => <MiniSvg viewBox="0 0 32 32">{c}</MiniSvg>;
const bulb = <g><ellipse cx="24" cy="14" rx="5" ry="7" fill="#cfe2fa" stroke="#4a87dc" strokeWidth="1.6" /><rect x="22" y="20" width="4" height="5" fill="#555" /></g>;
const redX = <path d="M16 16L30 30M30 16L16 30" stroke="#c8281c" strokeWidth="4" />;
const viewIcons: React.ReactNode[] = [
  M(<g><rect x="4" y="2" width="26" height="28" fill="#eee" stroke="#555" strokeWidth="2" /><path d="M4 2h8v9H4zM21 2h9v9h-9zM12 11h9v9h-9zM4 20h8v10H4zM21 20h9v10h-9z" fill="#555" /></g>),
  M(<g><path d="M4 10L12 3H30V24L22 31H4Z" fill="#a7cbec" stroke="#3a6fae" strokeWidth="2" /><path d="M4 10H22V31M22 10L30 3" stroke="#3a6fae" strokeWidth="2" fill="none" /><rect x="7" y="16" width="12" height="3" fill="#d33" /><rect x="7" y="22" width="12" height="3" fill="#3a3" /></g>),
  M(<g><circle cx="14" cy="12" r="8" fill="#f5c63d" stroke="#b98a1c" /><path d="M14 0v4M2 12h4M5 3l3 3M23 3l-3 3M5 21l3-3" stroke="#b98a1c" strokeWidth="2" />{redX}</g>),
  M(<g><circle cx="13" cy="10" r="8" fill="#cfe2fa" stroke="#3a6fae" strokeWidth="2" /><rect x="4" y="22" width="16" height="6" fill="#666" />{redX}</g>),
  M(<g><path d="M2 8L10 4L18 12V26H8Z" fill="#ddd" stroke="#666" strokeWidth="1.6" /><path d="M10 4L18 12L24 6" stroke="#666" fill="none" />{bulb}</g>),
  M(<g><rect x="3" y="8" width="22" height="20" fill="#a7cbec" stroke="#3a6fae" strokeWidth="2" /><path d="M8 8V2H18V8M3 18H25" stroke="#555" strokeWidth="2" fill="none" />{redX}</g>),
  M(<g><rect x="3" y="10" width="18" height="18" fill="#a7cbec" stroke="#3a6fae" strokeWidth="2" /><path d="M9 10V4H18V10" stroke="#555" strokeWidth="2" fill="none" /><rect x="9" y="18" width="7" height="3" fill="#d33" />{bulb}</g>),
  M(<g><path d="M16 1L30 11V26L16 32L2 26V11Z" fill="#e6e6e6" stroke="#555" strokeWidth="2" /><path d="M2 12L16 20L30 11M16 20V32" stroke="#555" fill="none" /><rect x="17" y="21" width="11" height="9" fill="#3b8a8a" stroke="#1d5c5c" /><path d="M19 21v-3a3.500 3.500 0 0 1 7 0v3" stroke="#1d5c5c" strokeWidth="1.5" fill="none" /></g>),
  M(<g fill="none" stroke="#555" strokeWidth="2"><path d="M2 14L22 2L30 16" /><ellipse cx="11" cy="18" rx="8" ry="6" fill="#e6eef8" /><ellipse cx="24" cy="16" rx="6" ry="5" fill="#e6eef8" /></g>),
  M(<g><ellipse cx="16" cy="14" rx="6" ry="9" fill="#cfe2fa" stroke="#4a87dc" strokeWidth="2" /><rect x="13" y="23" width="6" height="6" fill="#777" /></g>),
  M(<g fill="none" stroke="#222" strokeWidth="2"><path d="M4 4H24L30 10V28H4Z" strokeDasharray="4 2" /><rect x="14" y="14" width="8" height="8" /></g>),
  M(<g><path d="M3 14L16 3L28 14V28H3Z" fill="#ddd" stroke="#666" strokeWidth="2" /><path d="M8 14V28M14 10V28M3 20H20" stroke="#b5281c" strokeWidth="2" />{bulb}</g>),
  M(<g fill="#888" stroke="#444" strokeWidth="1.5"><rect x="4" y="10" width="17" height="18" /><path d="M10 10L20 3H28V20L21 26V10H10" fill="#aaa" /></g>),
  M(<g><path d="M3 2V14M29 2V14M4 8H28" stroke="#333" strokeWidth="2" fill="none" /><path d="M4 8l5-3v6zM28 8l-5-3v6z" fill="#333" /><path d="M4 24H16" stroke="#999" strokeWidth="2" strokeDasharray="3 2" /><rect x="18" y="20" width="11" height="9" fill="#555" /><path d="M20 20v-3a3.500 3.500 0 0 1 7 0v3" stroke="#555" strokeWidth="1.5" fill="none" /></g>),
];
const viewWidths = [39, 41, 41, 46, 38, 44, 42, 40, 43, 42, 42, 42, 42, 42];

const cursorTail = <path d="M18 14V32L22 28L25 32L26 31L24 27H28Z" fill="#fff" stroke="#222" strokeWidth="1.2" />;
const statusRight: React.ReactNode[] = [
  M(<g><path d="M2 2H20V14H2Z" fill="#e8c14c" stroke="#a88a2a" strokeWidth="1.6" /><circle cx="8" cy="8" r="3" fill="#fff" /><circle cx="15" cy="8" r="3" fill="#fff" />{cursorTail}</g>),
  M(<g><path d="M4 26L14 4V26Z" fill="none" stroke="#3a6fc0" strokeWidth="3" /><path d="M16 0L26 12M26 0L16 12" stroke="#c8281c" strokeWidth="3" />{cursorTail}</g>),
  M(<g><rect x="6" y="0" width="12" height="20" fill="#e8b87c" stroke="#8a3a1c" strokeWidth="2" /><path d="M6 7H18M6 13H18" stroke="#8a3a1c" strokeWidth="2" />{cursorTail}</g>),
  M(<g><rect x="4" y="4" width="12" height="22" fill="#cfe2fa" stroke="#3a6fc0" strokeWidth="2.5" /><path d="M16 0L26 12M26 0L16 12" stroke="#c8281c" strokeWidth="3" />{cursorTail}</g>),
  M(<g><path d="M12 2V22M2 12H22M12 2l-3 4h6zM12 22l-3-4h6zM2 12l4-3v6zM22 12l-4-3v6z" stroke="#111" strokeWidth="2" fill="#111" />{cursorTail}</g>),
  M(<g fill="none"><circle cx="16" cy="16" r="11" stroke="#aaa" strokeWidth="5" strokeDasharray="4 2" /></g>),
  M(<g><path d="M3 3H29L19 16V30L13 30V16Z" fill="#999" stroke="#555" strokeWidth="1.6" /><rect x="5" y="2" width="22" height="5" fill="#eee" stroke="#666" /></g>),
];
const statusRightW = [45, 45, 37, 55, 31, 58, 22];

const TabDocIcon = () => (
  <VTabIcon viewBox="0 0 33 30"><rect x="1" y="2" width="18" height="26" fill="#d8d8d8" stroke="#888" strokeWidth="2" /><rect x="14" y="4" width="18" height="24" fill="#e8e8e8" stroke="#888" strokeWidth="2" /><path d="M18 12V22" stroke="#777" strokeDasharray="2 2" /></VTabIcon>
);

export default function App() {
  return (
    <>
      <Global />
      <Defs />
      <Window>
        <TitleBar>
          {qat.map(([c], i) => <Slot key={i} $w={SLOT} $ml={qatMargins[i]}>{c}</Slot>)}
          <Spacer $w={416} />
          <AppTitle>Autodesk Revit 2023 - Temporary Container Housing 1 - 3D View: {'{3D}'}</AppTitle>
          <Spacer $w={127} />
          <Slot $w={14}><LeftCaret /></Slot>
          <Slot $w={62}><QatSvg viewBox="0 0 40 46"><path d="M6 42V18L11 6H17V42ZM23 42V6H29L34 18V42Z" fill="#eee" stroke="#333" strokeWidth="2.4" /><path d="M17 18H23" stroke="#333" strokeWidth="4" /></QatSvg></Slot>
          <Slot $w={34}><QatSvg viewBox="0 0 40 46"><circle cx="20" cy="14" r="9" fill="#4b7fdc" /><path d="M16 22V28L4 36V43H36V36L24 28V22Z" fill="#3a68c0" stroke="#234" /></QatSvg></Slot>
          <Slot $w={176}><UserText>0277511</UserText></Slot>
          <Slot $w={16}><Caret /></Slot>
          <Spacer $w={13} />
          <Slot $w={44}><QatSvg viewBox="0 0 40 46"><path d="M4 6H10L16 30H34L37 14H12" fill="#d7dcee" stroke="#4a5a9c" strokeWidth="3" /><circle cx="18" cy="38" r="4" fill="#fff" stroke="#4a5a9c" strokeWidth="2" /><circle cx="31" cy="38" r="4" fill="#fff" stroke="#4a5a9c" strokeWidth="2" /></QatSvg></Slot>
          <Slot $w={26}><QatSep /></Slot>
          <Slot $w={42}><QatSvg viewBox="0 0 40 46"><ellipse cx="20" cy="23" rx="15" ry="20" fill="#f2f2f2" stroke="#444" strokeWidth="2.4" /><text x="20" y="33" textAnchor="middle" fontSize="28" fontWeight="bold" fill="#2a5cc0" fontFamily="Liberation Sans">?</text></QatSvg></Slot>
          <Slot $w={30}><Caret /></Slot>
          <Spacer $w={104} />
          <Slot $w={50}><QatSvg viewBox="0 0 40 46"><rect x="12" y="33" width="16" height="5" fill="#333" /></QatSvg></Slot>
          <Slot $w={52}><QatSvg viewBox="0 0 40 46"><rect x="9" y="4" width="22" height="36" fill="none" stroke="#333" strokeWidth="3" /><rect x="9" y="4" width="22" height="6" fill="#333" /></QatSvg></Slot>
          <Slot $w={46}><QatSvg viewBox="0 0 40 46"><path d="M9 4L31 38M31 4L9 38" stroke="#222" strokeWidth="4" /></QatSvg></Slot>
        </TitleBar>

        <TabRow>
          <FileTab>File</FileTab>
          <RibbonTab $w={165} $on>Architecture</RibbonTab>
          {tabs.map(([t, w]) => <RibbonTab key={t} $w={w}>{t}</RibbonTab>)}
          <PinWrap><PinBox><UpTri /></PinBox><Caret /></PinWrap>
        </TabRow>

        <Ribbon>
          <Panel $w={117}>
            <PanelItems>
              <ModifyBtn>
                <RibbonSvg viewBox="0 0 72 64">{Ico.cursor}</RibbonSvg>
                <ModifyLabel>Modify</ModifyLabel>
              </ModifyBtn>
            </PanelItems>
            <PanelLabel>Select <Caret $s={5} /></PanelLabel>
          </Panel>
          {panels.map((pn, pi) => {
            let prev = pn.x;
            return (
              <Panel key={pn.label} $w={pn.w} $last={pi === panels.length - 1}>
                <PanelItems>
                  {pn.items.map((it, i) => {
                    const ml = it.cx - 35 - prev;
                    prev = it.cx + 35;
                    return (
                      <Item key={i} $ml={ml} $off={it.off}>
                        <RibbonSvg viewBox="0 0 72 64" $off={it.off}>{Ico[it.i]}</RibbonSvg>
                        {it.l.map(s => <span key={s}>{s}</span>)}
                        {it.c && <ItemCaret />}
                        {it.side !== undefined && <SideCaret $x={it.side} />}
                      </Item>
                    );
                  })}
                </PanelItems>
                <PanelLabel>{pn.label}{pn.caret && <Caret $s={5} />}</PanelLabel>
              </Panel>
            );
          })}
        </Ribbon>
        <RibbonFoot />
        <GapBar />

        <Body>
          <Dock>
            <DockPanel>
              <PanelHead $h={41}>Properties<CloseSvg viewBox="0 0 20 20"><X /></CloseSvg></PanelHead>
              <TypeBox>
                <Thumb><House /></Thumb>
                <TypeName>3D View</TypeName>
                <DarkCaret $s={7} $c="#444" />
              </TypeBox>
              <InstanceRow>
                <InstanceSel>3D View: {'{3D}'}<svg width="14" height="8" viewBox="0 0 14 8"><path d="M1 1L7 7L13 1" stroke="#666" strokeWidth="1.4" fill="none" /></svg></InstanceSel>
                <EditType>
                  <svg width="16" height="16" viewBox="0 0 16 16"><path d="M1 1h6v6H1zM9 1h6v6H9zM1 9h6v6H1zM9 9h6v6H9z" fill="#f5f5f5" stroke="#777" /><rect x="11" y="11" width="3" height="2" fill="#36c" /></svg>
                  Edit Type
                </EditType>
              </InstanceRow>
              <GridWrap>
                <Grid>
                  <GroupHead>Graphics<Chev /></GroupHead>
                  <Row><LabelCell>View Scale</LabelCell><ValueCell><ScaleInput>1/8" = 1'-0"</ScaleInput></ValueCell></Row>
                  <Row><LabelCell $dim>Scale Value<span>1:</span></LabelCell><ValueCell $dim>96</ValueCell></Row>
                  <Row><LabelCell>Detail Level</LabelCell><ValueCell>Medium</ValueCell></Row>
                  <Row><LabelCell>Parts Visibility</LabelCell><ValueCell>Show Original</ValueCell></Row>
                  <Row><LabelCell>Visibility/Grap...</LabelCell><ValueCell><EditBtn>Edit...</EditBtn></ValueCell></Row>
                  <Row><LabelCell>Graphic Displa...</LabelCell><ValueCell><EditBtn>Edit...</EditBtn></ValueCell></Row>
                  <Row><LabelCell>Discipline</LabelCell><ValueCell>Coordination</ValueCell></Row>
                  <Row><LabelCell>Show Hidden ...</LabelCell><ValueCell>By Discipline</ValueCell></Row>
                  <Row><LabelCell>Default Analys...</LabelCell><ValueCell>None</ValueCell></Row>
                  <Row><LabelCell>Show Grids</LabelCell><ValueCell><EditBtn>Edit...</EditBtn></ValueCell></Row>
                  <Row><LabelCell>Sun Path</LabelCell><ValueCell><Check /></ValueCell></Row>
                  <GroupHead>Extents<Chev /></GroupHead>
                  <Row><LabelCell>Crop View</LabelCell><ValueCell><Check /></ValueCell></Row>
                  <Row><LabelCell>Crop Region</LabelCell><ValueCell><Check /></ValueCell></Row>
                </Grid>
                <Track $top={34} $h={190} $left={8} />
              </GridWrap>
              <PropFoot>
                <HelpLink>Properties help</HelpLink>
                <ApplyBtn>Apply</ApplyBtn>
              </PropFoot>
            </DockPanel>

            <DockPanel>
              <PanelHead $h={40}>Project Browser - Temporary Conta...<CloseSvg viewBox="0 0 20 20"><X /></CloseSvg></PanelHead>
              <TreeWrap>
                <Tree>
                  <TreeConnectors />
                  {tree.map((r, i) => {
                    if (r.k === 'root') return <TreeRow key={i} $pad={7}><Expander $gap={14} /><RootSvg viewBox="0 0 32 30">{rootIcons.root}</RootSvg>{r.t}</TreeRow>;
                    if (r.k === 'exp' || r.k === 'plus') return <TreeRow key={i} $pad={47}><Expander $gap={20} $plus={r.k === 'plus'} />{r.t}</TreeRow>;
                    if (r.k === 'leaf') return <TreeRow key={i} $pad={120}><LeafIcon /><LeafText $sel={r.sel}>{r.t}</LeafText></TreeRow>;
                    return <TreeRow key={i} $pad={40}><RootSvg viewBox="0 0 32 30">{rootIcons[r.k]}</RootSvg>{r.t}</TreeRow>;
                  })}
                </Tree>
                <Track $top={34} $h={599} $left={7} />
              </TreeWrap>
              <BrowserFoot><HBar /></BrowserFoot>
            </DockPanel>
          </Dock>

          <ViewArea>
            <TabStrip>
              <VTab $w={315}><TabDocIcon />Bottom of container</VTab>
              <VTab $w={256} $on><VTabHouse><House size={32} /></VTabHouse>{'{3D}'}<VTabClose viewBox="0 0 20 20"><X /></VTabClose></VTab>
              <VTab $w={400}><TabDocIcon />Top of container</VTab>
              <StripCaret $s={7} $c="#333" />
            </TabStrip>
            <CanvasRow>
              <Canvas>
                <Drawing viewBox="450 396 2965 1577">
                  <Building />
                  <ViewCube />
                </Drawing>
                <Activate>
                  <ActivateBig>Activate Windows</ActivateBig>
                  <ActivateSmall>Go to Settings to activate Windows.</ActivateSmall>
                </Activate>
                <NavBar><NavIcons /></NavBar>
              </Canvas>
              <Gutter><VThumb /></Gutter>
            </CanvasRow>
            <ViewBarRow>
              <ScaleText>1/8" = 1'-0"</ScaleText>
              {viewIcons.map((c, i) => <Mini key={i} $w={viewWidths[i]}>{c}</Mini>)}
              <HThumb />
              <Grip viewBox="0 0 16 18"><path d="M14 1v2M10 7v2M14 7v2M6 13v2M10 13v2M14 13v2" stroke="#888" strokeWidth="2" /></Grip>
            </ViewBarRow>
          </ViewArea>
        </Body>

        <StatusBar>
          <StatusText>Click to select, TAB for alternates, CTRL adds, SHIFT unselects.</StatusText>
          <Mini $w={50}>{M(<g><rect x="10" y="2" width="8" height="10" fill="#3d7a2a" /><circle cx="14" cy="4" r="3" fill="#6ab04a" /><rect x="5" y="14" width="9" height="16" fill="#fff" stroke="#2a5cc0" strokeWidth="2" /><rect x="18" y="14" width="9" height="16" fill="#fff" stroke="#2a5cc0" strokeWidth="2" /></g>)}</Mini>
          <Combo $w={406}><ComboText /><ComboDrop><svg width="10" height="8" viewBox="0 0 10 8"><path d="M1 1L5 7L9 1" stroke="#888" fill="none" /></svg></ComboDrop></Combo>
          <Mini $w={50}>{M(<g><path d="M6 2H26V14L14 30H6V18L16 12H6Z" fill="#aaa" /></g>)}</Mini>
          <ZeroLabel>:0</ZeroLabel>
          <Mini $w={50}>{M(<g><rect x="4" y="1" width="24" height="30" fill="#f3f3f3" stroke="#333" strokeWidth="2" /><rect x="4" y="1" width="24" height="6" fill="#444" /><path d="M8 12h4v3H8zM8 19h4v3H8zM15 13h10M15 20h10" stroke="#333" strokeWidth="2" /></g>)}</Mini>
          <Mini $w={40}>{M(<g><rect x="4" y="2" width="22" height="28" fill="#999" /><path d="M10 8V26L14 22L18 28L20 26L17 20H24Z" fill="#fff" stroke="#555" /></g>)}</Mini>
          <Spacer $w={5} />
          <Combo $w={406}><ComboText>Main Model</ComboText><ComboDrop><svg width="10" height="8" viewBox="0 0 10 8"><path d="M1 1L5 7L9 1" stroke="#888" fill="none" /></svg></ComboDrop></Combo>
          <Spacer $w={429} />
          {statusRight.map((c, i) => <Mini key={i} $w={statusRightW[i]}>{c}</Mini>)}
          <span>:0</span>
        </StatusBar>
      </Window>
    </>
  );
}
